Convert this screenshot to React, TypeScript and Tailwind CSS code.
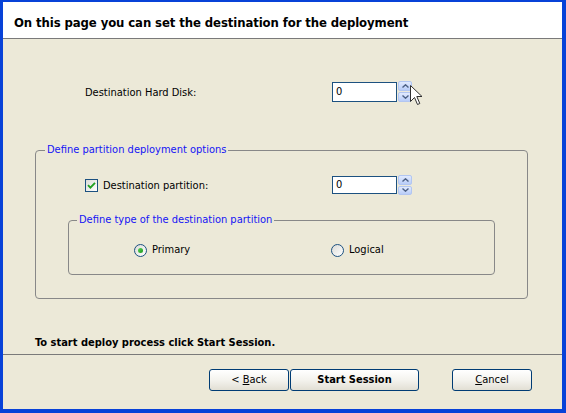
import React from 'react';

const font = "font-['DejaVu_Sans_Condensed','DejaVu_Sans',sans-serif]";

interface SpinnerProps {
  value: string;
  small?: boolean;
}

const SpinArrow: React.FC<{ up?: boolean }> = ({ up }) => (
  <div className="flex-1 flex items-center justify-center rounded-[2px] border border-[#b2c6f2] bg-gradient-to-b from-[#e1eafe] to-[#b9cdf8]">
    <svg width="7" height="4" viewBox="0 0 7 4">
      <path
        d={up ? 'M0.5 3.5 L3.5 0.8 L6.5 3.5' : 'M0.5 0.5 L3.5 3.2 L6.5 0.5'}
        fill="none"
        stroke="#4d6185"
        strokeWidth="1.4"
      />
    </svg>
  </div>
);

const Spinner: React.FC<SpinnerProps> = ({ value, small }) => (
  <div className="flex items-center gap-px">
    <div
      className={`w-[65px] ${small ? 'h-[18px]' : 'h-[20px]'} border border-[#1c5180] bg-white flex items-center pl-[3px] pt-px text-[11px] text-black`}
    >
      {value}
    </div>
    <div className={`flex flex-col gap-px w-[14px] ${small ? 'h-[20px]' : 'h-[21px]'}`}>
      <SpinArrow up />
      <SpinArrow />
    </div>
  </div>
);

const Checkbox: React.FC = () => (
  <div className="w-[13px] h-[13px] border border-[#1c5180] bg-gradient-to-br from-[#dcdcd7] to-white flex items-center justify-center">
    <svg width="9" height="9" viewBox="0 0 9 9">
      <path d="M1 4.2 L3.4 6.6 L8 1.8" fill="none" stroke="#21a121" strokeWidth="1.9" />
    </svg>
  </div>
);

const Radio: React.FC<{ checked?: boolean }> = ({ checked }) => (
  <div className="w-[13px] h-[13px] rounded-full border border-[#1c5180] bg-gradient-to-br from-[#dcdcd7] to-white flex items-center justify-center">
    {checked && <div className="w-[5px] h-[5px] rounded-full bg-gradient-to-br from-[#55d655] to-[#1a961a]" />}
  </div>
);

const Button: React.FC<{ width: string; children: React.ReactNode; bold?: boolean }> = ({ width, children, bold }) => (
  <button
    className={`${width} h-[22px] border border-[#003c74] rounded-[3px] bg-gradient-to-b from-white via-[#f4f3ee] to-[#e2dfd4] text-[11px] text-black flex items-center justify-center pt-px ${bold ? 'font-bold' : ''}`}
  >
    {children}
  </button>
);

export default function App() {
  return (
    <div className={`relative w-[566px] h-[413px] bg-[#0842d8] pl-[3px] pt-[2px] pr-[4px] pb-[4px] ${font}`}>
      <div className="flex flex-col h-full bg-[#ece9d8] text-[11px] text-black">
        <header className="h-[37px] bg-white border-b border-[#7a7a7a] flex items-center pl-[11px] pt-[5px] shrink-0">
          <h1 className="text-[13px] font-bold tracking-[-0.1px]">On this page you can set the destination for the deployment</h1>
        </header>

        <div className="mt-[42px] h-[21px] flex items-center pl-[82px]">
          <span className="w-[247px] pt-[3px]">Destination Hard Disk:</span>
          <Spinner value="0" />
        </div>

        <fieldset className="ml-[32px] mt-[41px] w-[493px] h-[156px] border border-[#888888] rounded-[4px]">
          <legend className="ml-[9px] px-[2px] leading-[14px] text-[#1414f5]">Define partition deployment options</legend>
          <div className="mt-[18px] h-[20px] flex items-center pl-[49px]">
            <Checkbox />
            <span className="ml-[5px] w-[229px] pt-[2px]">Destination partition:</span>
            <Spinner value="0" small />
          </div>

          <fieldset className="ml-[32px] mt-[18px] w-[427px] h-[62px] border border-[#888888] rounded-[4px]">
            <legend className="ml-[8px] px-[2px] leading-[14px] text-[#1414f5]">Define type of the destination partition</legend>
            <div className="mt-[16px] h-[14px] flex items-center pl-[65px]">
              <div className="w-[197px] flex items-center gap-[5px]">
                <Radio checked />
                <span className="pt-px">Primary</span>
              </div>
              <div className="flex items-center gap-[5px]">
                <Radio />
                <span className="pt-px">Logical</span>
              </div>
            </div>
          </fieldset>
        </fieldset>

        <p className="mt-[37px] pl-[32px] leading-[14px] font-bold">To start deploy process click Start Session.</p>

        <div className="mt-[4px] border-t border-[#7a7a7a]" />

        <div className="mt-[14px] flex items-center pl-[206px]">
          <Button width="w-[80px]">
            &lt; <span className="underline ml-[3px]">B</span>ack
          </Button>
          <div className="ml-px">
            <Button width="w-[129px]" bold>
              Start Session
            </Button>
          </div>
          <div className="ml-[33px]">
            <Button width="w-[80px]">
              <span className="underline">C</span>ancel
            </Button>
          </div>
        </div>
      </div>

      <svg className="absolute left-[410px] top-[85px]" width="13" height="21" viewBox="0 0 13 21">
        <path d="M0.5 0.5 L0.5 16.5 L4.5 12.5 L7.5 19.5 L9.8 18.5 L6.8 11.5 L12 11.5 Z" fill="white" stroke="#303030" strokeWidth="1" />
      </svg>
    </div>
  );
}
